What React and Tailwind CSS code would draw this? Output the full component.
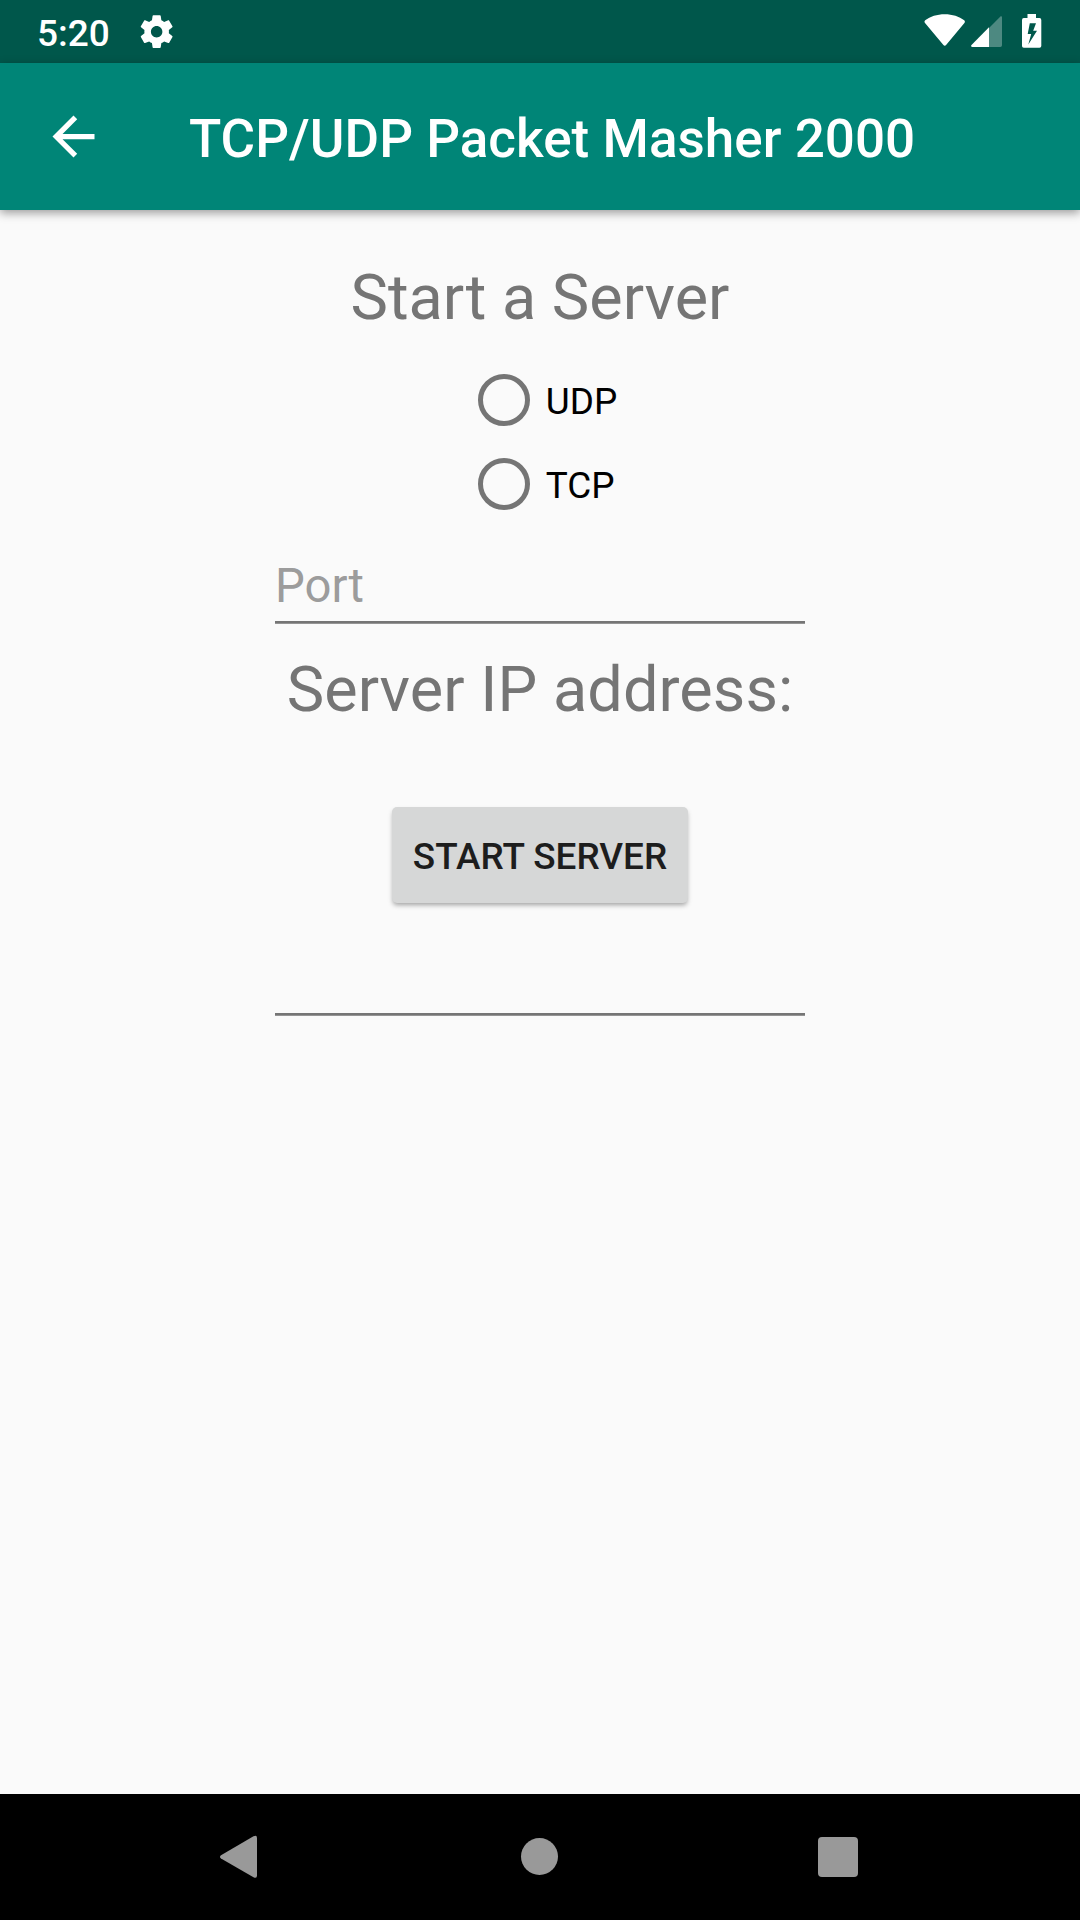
function StatusBar() {
  return (
    <div className="flex h-[63px] items-center justify-between bg-[#00574b] pl-[37px] pr-[38px] text-white">
      <div className="flex items-center">
        <span className="pt-[5px] text-[37px] font-medium leading-[58px]">5:20</span>
        <svg className="ml-[27px] size-[39.3px]" viewBox="0 0 24 24" fill="currentColor">
          <path d="M19.43 12.98c.04-.32.07-.64.07-.98s-.03-.66-.07-.98l2.11-1.65c.19-.15.24-.42.12-.64l-2-3.46c-.12-.22-.39-.3-.61-.22l-2.49 1c-.52-.4-1.08-.73-1.69-.98l-.38-2.65C14.46 2.18 14.25 2 14 2h-4c-.25 0-.46.18-.49.42l-.38 2.65c-.61.25-1.17.59-1.69.98l-2.49-1c-.23-.09-.49 0-.61.22l-2 3.46c-.13.22-.07.49.12.64l2.11 1.65c-.04.32-.07.65-.07.98s.03.66.07.98l-2.11 1.65c-.19.15-.24.42-.12.64l2 3.46c.12.22.39.3.61.22l2.49-1c.52.4 1.08.73 1.69.98l.38 2.65c.03.24.24.42.49.42h4c.25 0 .46-.18.49-.42l.38-2.65c.61-.25 1.17-.59 1.69-.98l2.49 1c.23.09.49 0 .61-.22l2-3.46c.12-.22.07-.49-.12-.64l-2.11-1.65zM12 15.5c-1.93 0-3.5-1.57-3.5-3.5s1.57-3.5 3.5-3.5 3.5 1.57 3.5 3.5-1.57 3.5-3.5 3.5z" />
        </svg>
      </div>
      <div className="flex items-start">
        <svg className="h-[36px] w-[42px]" viewBox="0 0 42 36" fill="currentColor">
          <path d="M1.2 9.2C.3 8.4.2 7.2 1.2 6.3 6.300 2.400 13 .2 20.700 .2S35.200 2.400 40.200 6.300C41.200 7.200 41.100 8.400 40.200 9.300L22.300 30.800C21.200 32.200 20.300 32.200 19.200 30.800Z" />
        </svg>
        <svg className="ml-[5px] mt-[2px] h-[32px] w-[32px]" viewBox="0 0 32 32" fill="currentColor">
          <path opacity=".3" d="M18 12 29.200 .8C30 0 31 .3 31 1.500V29.300Q31 31 29.300 31H18Z" />
          <path d="M18 11.300V31H1.300C0 31-.2 30 .5 29Z" />
        </svg>
        <svg className="ml-[19px] h-[35px] w-[20px]" viewBox="0 0 20 35" fill="currentColor">
          <path fillRule="evenodd" d="M5.500 0H14V4H17.500Q19.300 4 19.300 6V32Q19.300 33.800 17.500 33.800H1.800Q0 33.800 0 32V6Q0 4 1.800 4H5.500ZM7.800 9.200 5.700 20H9.200L6.300 30.500 15 16.800H11.200L14 9.200Z" />
        </svg>
      </div>
    </div>
  );
}

function AppBar() {
  return (
    <header className="relative flex h-[147px] items-center bg-[#008577] pl-[42px] text-white shadow-[0_3px_9px_rgba(0,0,0,0.38)]">
      <svg className="size-[63px]" viewBox="0 0 24 24" fill="currentColor">
        <path d="M20 11H7.830l5.590-5.590L12 4l-8 8 8 8 1.410-1.410L7.830 13H20v-2z" />
      </svg>
      <h1 className="ml-[84px] pt-[5px] text-[53px] font-medium leading-[62px] tracking-[0.03px]">TCP/UDP Packet Masher 2000</h1>
    </header>
  );
}

function RadioOption({ label }) {
  return (
    <label className="flex h-[84px] items-center">
      <span className="size-[52.5px] rounded-full border-[5.25px] border-[#757575]" />
      <span className="ml-[15.5px] pt-[3px] text-[36.9px] leading-[44px] text-black">{label}</span>
    </label>
  );
}

function Underline() {
  return (
    <div className="w-[530px]">
      <div className="h-[2px] bg-[#757575]" />
      <div className="h-px bg-[#949494]" />
    </div>
  );
}

function NavBar() {
  return (
    <nav className="flex h-[126px] items-center justify-between bg-black pl-[219px] pr-[222px] text-[#999999]">
      <svg className="h-[44px] w-[39px]" viewBox="0 0 39 44" fill="currentColor">
        <path d="M2 20.300 34.500 1.300Q38 -.3 38 3V40.500Q38 43.800 34.500 42.200L2 23.400Q0 21.900 2 20.300Z" />
      </svg>
      <span className="mb-[1px] ml-[3px] size-[37px] rounded-full bg-[#999999]" />
      <span className="size-[40px] rounded-[4px] bg-[#999999]" />
    </nav>
  );
}

export default function App() {
  return (
    <div className="flex h-[1920px] w-[1080px] flex-col overflow-hidden bg-[#fafafa] font-['Roboto',sans-serif]">
      <StatusBar />
      <AppBar />
      <main className="flex flex-1 flex-col items-center">
        <h2 className="mt-[51px] text-[63px] leading-[74px] text-[#757575]">Start a Server</h2>
        <div className="mt-[23px] flex flex-col items-start pl-[15px]">
          <RadioOption label="UDP" />
          <RadioOption label="TCP" />
        </div>
        <div className="mt-[32px] w-[530px] text-[47.25px] leading-[56px] text-[#9c9c9c]">Port</div>
        <div className="mt-[7px]">
          <Underline />
        </div>
        <h2 className="mt-[29px] text-[63px] leading-[74px] tracking-[0.06px] text-[#757575]">Server IP address:</h2>
        <button className="mt-[80px] h-[96px] w-[296px] whitespace-nowrap rounded-[5px] bg-[#d6d7d7] pt-[3px] text-[36.9px] font-medium leading-[44px] text-[#1d1d1d] shadow-[0_3px_5px_-1px_rgba(0,0,0,0.36)]">
          START SERVER
        </button>
        <div className="mt-[110px]">
          <Underline />
        </div>
      </main>
      <NavBar />
    </div>
  );
}
